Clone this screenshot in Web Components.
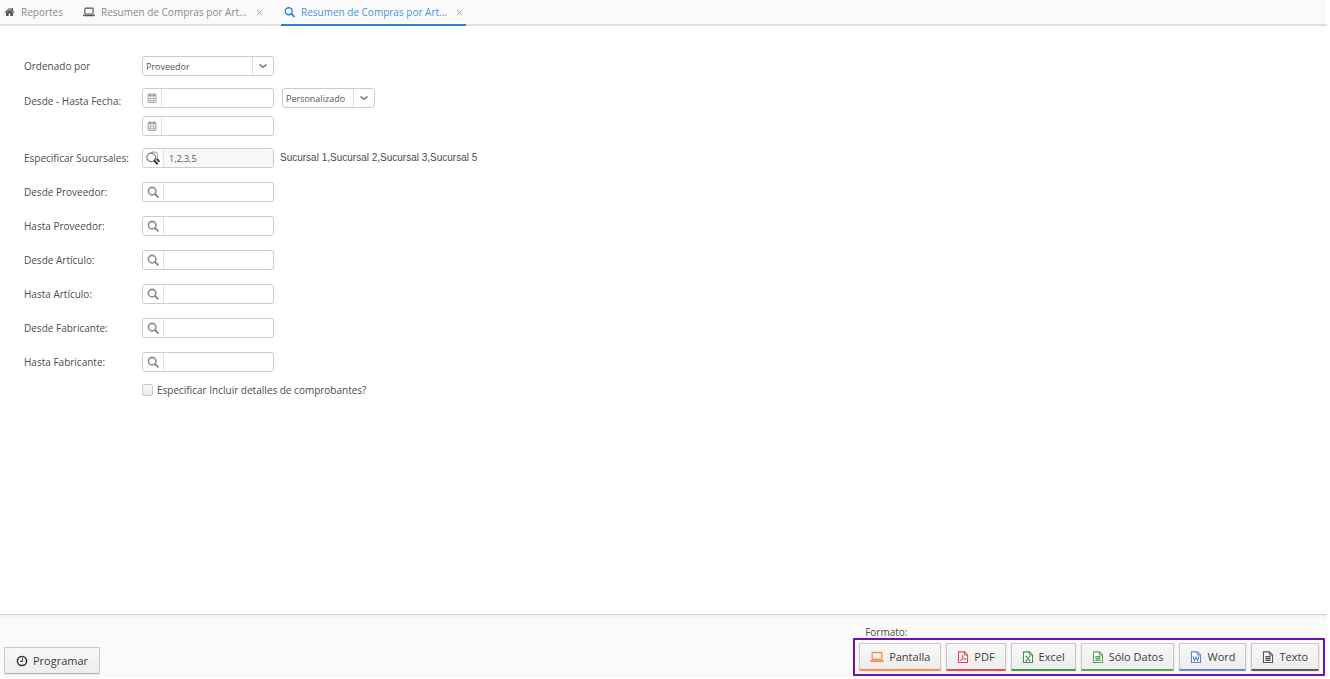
<!DOCTYPE html>
<html lang="es">
<head>
<meta charset="utf-8">
<title>Resumen de Compras por Artículo</title>
<style>
html,body{margin:0;height:100%}
body{font-family:"Open Sans","Noto Sans",sans-serif;font-size:10px;color:#4c4c4c;background:#fff}
</style>
</head>
<body>
<report-page></report-page>
<script>
const ICONS = {
  home: ['0 0 1792 1792', '<path d="M1472 992v480q0 26-19 45t-45 19h-384v-384h-256v384h-384q-26 0-45-19t-19-45v-480q0-1 .5-3t.5-3l575-474 575 474q1 2 1 6zm223-69l-62 74q-8 9-21 11h-3q-13 0-21-7l-692-577-692 577q-12 8-24 7-13-2-21-11l-62-74q-8-10-7-23.5t11-21.5l719-599q32-26 76-26t76 26l244 204v-195q0-14 9-23t23-9h192q14 0 23 9t9 23v408l219 182q10 8 11 21.5t-7 23.5z" fill="currentColor"/>'],
  laptop: ['0 0 14 12', '<rect x="2.2" y="1.5" width="9.6" height="6.9" rx=".8" fill="none" stroke="currentColor" stroke-width="1.3"/><path d="M.1 9.2h13.8v.7q0 1.1-1.3 1.1H1.4Q.1 11 .1 9.9z" fill="currentColor"/>'],
  search: ['0 0 14 14', '<circle cx="6" cy="6" r="4.4" fill="none" stroke="currentColor" stroke-width="1.8"/><path d="M9.3 9.3l3.4 3.4" stroke="currentColor" stroke-width="2.2" stroke-linecap="round"/>'],
  multi: ['0 0 14 14', '<circle cx="7.8" cy="4.8" r="4" fill="none" stroke="#999"/><path d="M10.8 7.8l2.6 3" stroke="#444" stroke-width="2"/><circle cx="5.2" cy="6.4" r="4.3" fill="#fff" stroke="#777" stroke-width="1.2"/><path d="M8.4 9.6l2.7 3.1" stroke="#333" stroke-width="2" stroke-linecap="round"/>'],
  calendar: ['0 0 12 12', '<path d="M2 2.5h8v8H2z" fill="#f2f2f2" stroke="currentColor"/><path d="M2 3.5h8M4 1v2M8 1v2" stroke="currentColor" stroke-width="1.6"/><path d="M4.5 4v6M7.5 4v6M2 6.4h8M2 8.5h8" stroke="currentColor" stroke-width=".7"/>'],
  clock: ['0 0 12 12', '<circle cx="6" cy="6" r="4.6" fill="none" stroke="currentColor" stroke-width="1.5"/><path d="M6.4 3.3v3.1H4" fill="none" stroke="currentColor"/>'],
  chevron: ['0 0 10 8', '<path d="M1.5 2.5L5 5.2l3.5-2.7" fill="none" stroke="currentColor" stroke-width="1.8"/>'],
  close: ['0 0 8 8', '<path d="M1 1l6 6M7 1L1 7" stroke="currentColor" stroke-width="1"/>']
};
const sheet = inner => '<path d="M1.5.9h6l3 3v7.6h-9z" fill="#fff" stroke="currentColor" stroke-width="1.1"/><path d="M7.3 1v3.1h3.2" fill="none" stroke="currentColor"/>' + inner;
ICONS.pdf = ['0 0 12 12', sheet('<path d="M3 9.8C5 8.2 5.7 6 5.4 3.9 5.4 6.2 7 8 9.2 8.1 6.8 7.7 4.6 8.4 3 9.8z" fill="none" stroke="currentColor" stroke-width=".9"/>')];
ICONS.excel = ['0 0 12 12', sheet('<path d="M4 5.2l4 4.8M8 5.2L4 10M3.2 5.2h2M3.2 10h2M6.8 10h2" fill="none" stroke="currentColor" stroke-width="1.1"/>')];
ICONS.word = ['0 0 12 12', sheet('<path d="M3 5.2l1.3 4.6L6 6l1.7 3.8L9 5.2" fill="none" stroke="currentColor" stroke-width="1.1"/>')];
ICONS.text = ['0 0 12 12', sheet('<path d="M3.3 5.6h5.4M3.3 7.5h5.4M3.3 9.4h5.4" stroke="currentColor" stroke-width="1.3"/>')];

const define = (name, render) => customElements.define(name, class extends HTMLElement {
  connectedCallback() {
    if (this.shadowRoot) return;
    this.attachShadow({ mode: 'open' }).innerHTML = render(this);
  }
});

define('ui-icon', el => {
  const [box, body] = ICONS[el.getAttribute('name')];
  return `<style>:host{display:inline-flex;flex:none;width:12px;height:12px}svg{width:100%;height:100%;display:block}</style>
  <svg viewBox="${box}" aria-hidden="true">${body}</svg>`;
});

define('nav-tab', el => `<style>
:host{display:flex;align-items:center;gap:9px;height:24px;color:#8a8a8a;border-bottom:2px solid transparent}
:host([active]){color:#4a92e4;border-color:#2b80dc}
a{display:flex;align-items:center;gap:6px;color:inherit;text-decoration:none;font-size:10px;line-height:16px;white-space:nowrap}
ui-icon{color:#555;width:11px}
ui-icon[name=laptop]{width:12px}
:host([active]) a ui-icon{color:#2b80dc}
button{display:flex;padding:0;border:0;background:none;color:#999}
button ui-icon{width:7px;height:7px;color:#999}
</style>
<a href="#"><ui-icon name="${el.getAttribute('icon')}"></ui-icon><slot></slot></a>
${el.hasAttribute('closable') ? '<button type="button" aria-label="Cerrar"><ui-icon name="close"></ui-icon></button>' : ''}`);

const BOX = `
.box{display:flex;box-sizing:border-box;width:132px;height:20px;border:1px solid #ccc;border-radius:3px;background:#fff;overflow:hidden}
.lead{display:flex;align-items:center;justify-content:center;flex:none;box-sizing:border-box;width:21px;padding:0;border:0;border-right:1px solid #e2e2e2;background:#fff;color:#888}
input,select{font:inherit;font-size:9px;color:#555;border:0;padding:0 5px;margin:0;background:none;min-width:0;flex:1;outline:0}
`;
const ROW = `
:host{display:grid;grid-template-columns:110px 1fr;column-gap:8px;align-items:center}
label{font-size:10px;line-height:16px;white-space:nowrap}
`;

define('lookup-field', el => {
  const value = el.getAttribute('value') || '';
  const icon = el.getAttribute('icon') || 'search';
  return `<style>${ROW}${BOX}
  .controls{display:flex;align-items:center;gap:6px}
  ::slotted(*){font:10px/16px "Liberation Sans",Arial,sans-serif;color:#4c4c4c}
  .box.filled input{background:#f8f8f8}
  ui-icon[name=multi]{width:14px;height:14px}
  </style>
  <label for="value">${el.getAttribute('label')}</label>
  <div class="controls">
    <div class="box ${value ? 'filled' : ''}"><button class="lead" type="button" aria-label="Buscar"><ui-icon name="${icon}"></ui-icon></button><input id="value" type="text" value="${value}"></div>
    <slot></slot>
  </div>`;
});

const dropDown = (id, value, attrs = '') => `<div class="box drop"><select id="${id}" ${attrs}><option>${value}</option></select><span class="arrow"><ui-icon name="chevron"></ui-icon></span></div>`;
const DROP = `
.drop{position:relative}
select{appearance:none;padding:0 24px 0 3px}
.arrow{position:absolute;right:0;top:0;bottom:0;width:20px;border-left:1px solid #ddd;display:flex;align-items:center;justify-content:center;color:#888;pointer-events:none}
.arrow ui-icon{width:10px;height:8px}
`;

define('order-field', el => `<style>${ROW}${BOX}${DROP}</style>
<label for="order">Ordenado por</label>${dropDown('order', 'Proveedor')}`);

define('date-range', el => `<style>${ROW}${BOX}${DROP}
:host{align-items:start}
label{padding-top:5px}
.controls{display:grid;grid-template-columns:132px 93px;gap:8px}
.drop{width:auto}
.lead{width:19px;color:#aaa}
</style>
<label for="from">Desde - Hasta Fecha:</label>
<div class="controls">
  <div class="box"><button class="lead" type="button" aria-label="Calendario"><ui-icon name="calendar"></ui-icon></button><input id="from" type="text"></div>
  ${dropDown('period', 'Personalizado', 'aria-label="Período"')}
  <div class="box"><button class="lead" type="button" aria-label="Calendario"><ui-icon name="calendar"></ui-icon></button><input type="text" aria-label="Hasta Fecha"></div>
</div>`);

define('check-field', el => `<style>
:host{display:block;padding-left:118px}
label{display:flex;align-items:center;gap:4px;font-size:10px;line-height:12px}
input{appearance:none;margin:0;box-sizing:border-box;width:11px;height:12px;border:1px solid #c8c8c8;border-radius:2px;background:linear-gradient(#fafafa,#e9e9e9)}
</style><label><input type="checkbox"><slot></slot></label>`);

define('action-button', el => `<style>
:host{display:block}
button{display:flex;align-items:center;justify-content:center;gap:5px;box-sizing:border-box;height:27px;padding:0 var(--pad,11px);
 font:inherit;font-size:11px;line-height:16px;color:#3c3c3c;border:1px solid #c9c9c9;border-bottom-color:var(--accent,#b5b5b5);
 border-radius:1px;background:linear-gradient(#f8f8f8,#ededed);box-shadow:0 1px 1px var(--glow,#0001);white-space:nowrap}
ui-icon{color:var(--accent,#333)}
ui-icon[name=laptop]{width:14px}
</style><button type="button"><ui-icon name="${el.getAttribute('icon')}"></ui-icon><slot></slot></button>`);

define('format-bar', el => `<style>
:host{display:block}
.title{font-size:10px;line-height:12px;padding-left:12px;margin:0}
.group{display:flex;gap:5px;border:2px solid #6e10ab;border-radius:1px;padding:3px 4px 4px}
action-button{--pad:10px;--glow:var(--accent)}
</style>
<p class="title" id="t">Formato:</p>
<div class="group" role="group" aria-labelledby="t">
<action-button icon="laptop" style="--accent:#f78b46">Pantalla</action-button>
<action-button icon="pdf" style="--accent:#e2474f">PDF</action-button>
<action-button icon="excel" style="--accent:#46924a">Excel</action-button>
<action-button icon="text" style="--accent:#57a556">Sólo Datos</action-button>
<action-button icon="word" style="--accent:#6286c4">Word</action-button>
<action-button icon="text" style="--accent:#555">Texto</action-button>
</div>`);

define('report-page', el => `<style>
:host{display:flex;flex-direction:column;min-height:100vh;box-sizing:border-box;padding:0 3px 1px 0}
nav{display:flex;background:#fafafa;box-shadow:inset 0 -2px #e0e0e0;padding-left:4px}
.first{margin-right:20px}
.second{margin-right:18px}
.third{padding:0 3px}
main{flex:1;padding:30px 24px}
form{display:flex;flex-direction:column;gap:12px}
.lookups{display:flex;flex-direction:column;gap:14px}
footer{display:flex;justify-content:space-between;align-items:flex-end;background:#fafafa;border-top:1px solid #d0d0d0;box-shadow:inset 0 2px 2px #0000000a;padding:11px 2px 2px 4px}
footer > action-button{margin-bottom:2px}
</style>
<nav>
  <nav-tab class="first" icon="home">Reportes</nav-tab>
  <nav-tab class="second" icon="laptop" closable>Resumen de Compras por Art...</nav-tab>
  <nav-tab class="third" icon="search" closable active>Resumen de Compras por Art...</nav-tab>
</nav>
<main><form>
  <order-field></order-field>
  <date-range></date-range>
  <div class="lookups">
    <lookup-field label="Especificar Sucursales:" icon="multi" value="1,2,3,5"><span>Sucursal 1,Sucursal 2,Sucursal 3,Sucursal 5</span></lookup-field>
    <lookup-field label="Desde Proveedor:"></lookup-field>
    <lookup-field label="Hasta Proveedor:"></lookup-field>
    <lookup-field label="Desde Artículo:"></lookup-field>
    <lookup-field label="Hasta Artículo:"></lookup-field>
    <lookup-field label="Desde Fabricante:"></lookup-field>
    <lookup-field label="Hasta Fabricante:"></lookup-field>
  </div>
  <check-field>Especificar Incluir detalles de comprobantes?</check-field>
</form></main>
<footer>
  <action-button icon="clock">Programar</action-button>
  <format-bar></format-bar>
</footer>`);
</script>
</body>
</html>
